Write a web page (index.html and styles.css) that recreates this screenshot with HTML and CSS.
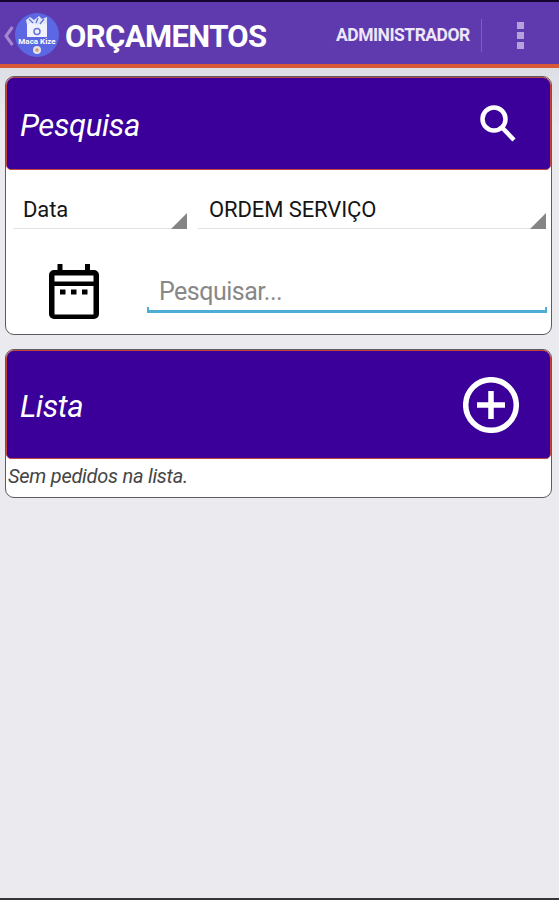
FILE: index.html
```html
<!DOCTYPE html>
<html lang="pt-BR">
  <head>
    <meta charset="UTF-8" />
    <meta name="viewport" content="width=device-width, initial-scale=1.0" />
    <title>Orçamentos</title>
    <link rel="stylesheet" href="styles.css">
  </head>
  <body>
    <header class="action-bar">
      <svg class="back" viewBox="0 0 11 20"><path d="M9.500 1 L3 10 L9.500 19" /></svg>
      <svg class="logo" viewBox="0 0 44 44">
        <circle cx="22" cy="22" r="22" fill="#5c67e3" />
        <path d="M12 10h20v14H12z" fill="#f0f2ff" />
        <path d="M11 7l4-3 4 3 5-4 3 3 5-2v7l-5-1-5 2-6-2-4 2z" fill="#dfe4ff" />
        <path d="M14 6l4 4M23 5l-2 5M29 6l-4 5" stroke="#6674c8" stroke-width="1.3" />
        <circle cx="22" cy="18.500" r="3" fill="none" stroke="#6675d8" stroke-width="1.5" />
        <text class="logo-text" x="22" y="31" text-anchor="middle">Maca Kize</text>
        <circle cx="22" cy="37" r="4" fill="#e5e2ea" />
        <circle cx="22" cy="37" r="1.800" fill="#d29a76" />
      </svg>
      <h1>ORÇAMENTOS</h1>
      <span class="user">ADMINISTRADOR</span>
      <div class="menu"><i></i><i></i><i></i></div>
    </header>

    <main>
      <section class="card">
        <div class="card-title">
          <h2>Pesquisa</h2>
          <svg class="icon-search" viewBox="0 0 36 37">
            <circle cx="14" cy="14" r="11.500" />
            <path d="M22.500 23 L34 35" />
          </svg>
        </div>
        <div class="filters">
          <div class="spinner spinner-date">Data</div>
          <div class="spinner spinner-type">ORDEM SERVIÇO</div>
        </div>
        <div class="search-row">
          <svg class="icon-calendar" viewBox="0 0 50 56">
            <path d="M8.500 0h5v8h-5zM36 0h5v8h-5z" />
            <path fill-rule="evenodd" d="M5 6h40a5 5 0 0 1 5 5v39a5 5 0 0 1-5 5H5a5 5 0 0 1-5-5V11a5 5 0 0 1 5-5zM5.500 11.500v6h39v-6zM5.500 22v28.500h39V22z" />
            <path d="M11 25.500h5.500v5H11zM22 25.500h5.500v5H22zM33 25.500h5.500v5H33z" />
          </svg>
          <div class="field">
            <input type="text" placeholder="Pesquisar..." />
          </div>
        </div>
      </section>

      <section class="card">
        <div class="card-title card-title-list">
          <h2>Lista</h2>
          <svg class="icon-add" viewBox="0 0 56 56">
            <circle cx="28" cy="28" r="25.300" />
            <path d="M28 14v28M14 28h28" />
          </svg>
        </div>
        <p class="empty">Sem pedidos na lista.</p>
      </section>
    </main>
  </body>
</html>
```
FILE: styles.css
```css
* {
  box-sizing: border-box;
}

body {
  margin: 0;
  height: 900px;
  display: flex;
  flex-direction: column;
  overflow: hidden;
  font-family: Roboto, sans-serif;
  background: #ebeaee;
  border-top: 2px solid #17052f;
  border-bottom: 2px solid #353537;
}

.action-bar {
  display: flex;
  align-items: center;
  height: 66px;
  padding-left: 3px;
  background: #5e3aae;
  border-bottom: 4px solid #d95836;
}

.back {
  width: 11px;
  height: 20px;
  margin-top: 5px;
  fill: none;
  stroke: #a387cf;
  stroke-width: 3;
}

.logo {
  width: 44px;
  height: 44px;
  margin: 4px 0 0 1px;
}

.logo-text {
  font-size: 8px;
  font-weight: bold;
  fill: #fff;
}

h1 {
  margin: 7px 0 0 6px;
  width: 271px;
  font-size: 31px;
  line-height: 36px;
  letter-spacing: -0.6px;
  color: #fff;
}

.user {
  width: 146px;
  height: 33px;
  margin-top: 4px;
  font-size: 17.5px;
  font-weight: bold;
  line-height: 33px;
  letter-spacing: -0.5px;
  color: #eee6fa;
  border-right: 1px solid #7c5dc0;
}

.menu {
  display: flex;
  flex-direction: column;
  gap: 3px;
  margin: 4px 0 0 35px;
}

.menu i {
  width: 7px;
  height: 7px;
  background: #b6a1dc;
}

main {
  display: flex;
  flex-direction: column;
  gap: 14px;
  padding: 8px 7px 0 5px;
  background: linear-gradient(#dcdfe5, #ebeaee 60px);
}

.card {
  background: #fff;
  border: 1px solid #5b5b60;
  border-radius: 9px;
}

.card-title {
  display: flex;
  align-items: center;
  justify-content: space-between;
  height: 93px;
  padding: 0 34px 0 13px;
  background: #3a0099;
  border: 1px solid #c0453f;
  border-radius: 8px 8px 5px 5px;
}

.card-title-list {
  height: 109px;
  padding-right: 31px;
}

h2 {
  margin: 3px 0 0;
  font-size: 31px;
  font-style: italic;
  font-weight: normal;
  letter-spacing: -0.4px;
  color: #fff;
}

.icon-search {
  width: 36px;
  height: 37px;
  fill: none;
  stroke: #fff;
  stroke-width: 4.500;
}

.icon-add {
  width: 56px;
  height: 56px;
  fill: none;
  stroke: #fff;
  stroke-width: 5.500;
}

.filters {
  display: flex;
  gap: 10px;
  padding: 20px 5px 0 7px;
}

.spinner {
  position: relative;
  height: 39px;
  padding-left: 10px;
  font-size: 22px;
  line-height: 40px;
  letter-spacing: -0.1px;
  color: #151515;
  border-bottom: 1px solid #e2e2e2;
}

.spinner-date {
  width: 174px;
}

.spinner-type {
  flex: 1;
  margin-left: 1px;
  padding-left: 11px;
}

/* corner arrow of the dropdown */
.spinner::after {
  content: "";
  position: absolute;
  right: 0;
  bottom: -1px;
  border-left: 16px solid transparent;
  border-bottom: 16px solid #858585;
}

.search-row {
  display: flex;
  align-items: flex-start;
  height: 105px;
  padding: 35px 4px 0 43px;
}

.icon-calendar {
  width: 50px;
  height: 56px;
}

.field {
  flex: 1;
  margin: 6px 0 0 48px;
  height: 43px;
  border-bottom: 3px solid #4eacd5;
  background: linear-gradient(#4eacd5, #4eacd5) left bottom / 2px 3px no-repeat,
    linear-gradient(#4eacd5, #4eacd5) right bottom / 2px 3px no-repeat;
}

input {
  width: 100%;
  height: 43px;
  padding: 0 12px;
  font-family: inherit;
  font-size: 25px;
  letter-spacing: -0.5px;
  background: none;
  border: none;
  outline: none;
}

input::placeholder {
  color: #888;
}

.empty {
  margin: 0;
  height: 38px;
  padding-left: 2px;
  font-size: 20px;
  font-style: italic;
  line-height: 34px;
  letter-spacing: -0.25px;
  color: #454545;
}
```
